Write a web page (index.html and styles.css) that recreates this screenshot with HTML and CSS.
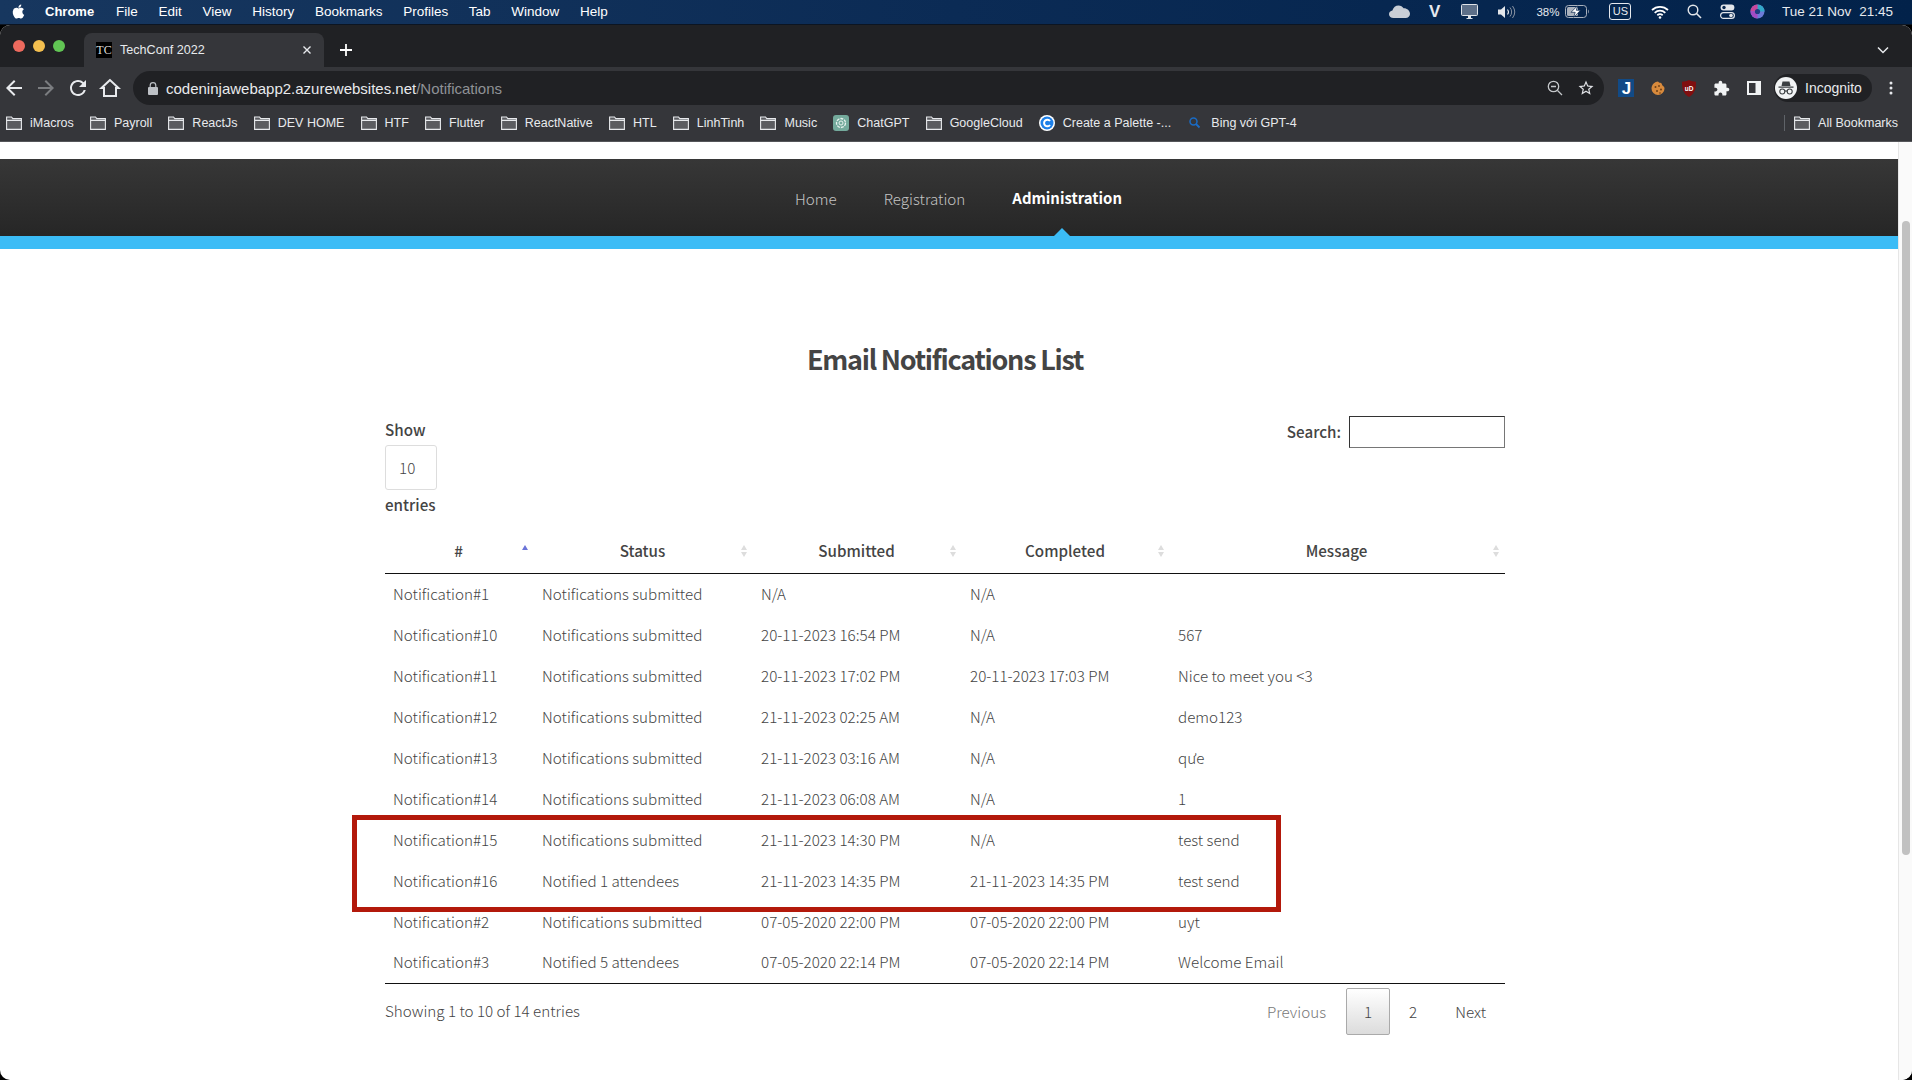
FILE: index.html
```html
<!DOCTYPE html>
<html lang="en">
<head>
    <meta charset="UTF-8">
    <title>TechConf 2022</title>
    <link rel="stylesheet" href="styles.css">
</head>
<body>
    <svg class="defs" width="0" height="0">
        <symbol id="folder" viewBox="0 0 16 14">
            <path d="M.6 1h4.900l1.300 1.600h8.600v10.800H.6z" fill="#5b5c60" stroke="#e8eaed" stroke-width="1.100"/>
            <path d="M.6 4.400h14.800" stroke="#e8eaed" stroke-width="1.100"/>
        </symbol>
    </svg>

    <!-- mac menu bar -->
    <div class="menubar">
        <div class="menus">
            <svg class="apple" viewBox="0 0 24 24"><path fill="#fff" d="M18.71 19.5c-.83 1.24-1.71 2.45-3.05 2.47-1.34.03-1.77-.79-3.29-.79-1.53 0-2 .77-3.27.82-1.31.05-2.3-1.32-3.14-2.53C4.25 17 2.94 12.45 4.7 9.39c.87-1.52 2.43-2.48 4.12-2.51 1.28-.02 2.5.87 3.29.87.78 0 2.26-1.07 3.8-.91.65.03 2.47.26 3.64 1.98-.09.06-2.17 1.28-2.15 3.81.03 3.02 2.65 4.03 2.68 4.04-.03.07-.42 1.44-1.38 2.83M13 3.5c.73-.83 1.94-1.46 2.94-1.5.13 1.17-.34 2.35-1.04 3.19-.69.85-1.83 1.51-2.95 1.42-.15-1.15.41-2.35 1.05-3.11z"/></svg>
            <span class="app-name">Chrome</span>
            <span>File</span>
            <span>Edit</span>
            <span>View</span>
            <span>History</span>
            <span>Bookmarks</span>
            <span>Profiles</span>
            <span>Tab</span>
            <span>Window</span>
            <span>Help</span>
        </div>
        <div class="status">
            <svg class="st-cloud" width="21" height="13" viewBox="0 0 21 13"><path fill="#c9ced6" d="M4.500 13C2 13 0 11.300 0 9.200 0 7.300 1.500 5.800 3.400 5.500 4.200 2.400 6.700.5 9.500.5c2.200 0 4.100 1.100 5.100 2.800 3-.3 6.400 2.200 6.400 5.700 0 2.300-1.900 4-4.300 4z"/></svg>
            <span class="st-v">V</span>
            <svg class="st-monitor" width="17" height="15" viewBox="0 0 17 15"><rect x=".5" y=".5" width="16" height="11" rx="1" fill="#5d6f88" stroke="#dfe3e8"/><path d="M5.500 14h6v1h-6zM7 12h3v2H7z" fill="#dfe3e8"/></svg>
            <svg class="st-sound" width="19" height="14" viewBox="0 0 19 14"><path fill="#e3e6ea" d="M0 4.500h3L7 1v12L3 9.500H0z"/><path fill="none" stroke="#e3e6ea" stroke-width="1.100" d="M9.500 4.500a4 4 0 0 1 0 5"/><path fill="none" stroke="#8a94a3" d="M12 2.500a7 7 0 0 1 0 9M14.500 1a10 10 0 0 1 0 12"/></svg>
            <span class="st-pct">38%</span>
            <svg class="st-batt" width="25" height="13" viewBox="0 0 25 13"><rect x=".5" y=".5" width="21" height="12" rx="3" fill="none" stroke="#aab2bd"/><rect x="2" y="2" width="11" height="9" rx="1.500" fill="#aab2bd"/><path d="M12.500.8 6 7.300h4.200L8.700 12.300l6.800-7h-4.200z" fill="#fff" stroke="#08264d" stroke-width=".7"/><path d="M23 4.500c1 .4 1 3.600 0 4z" fill="#aab2bd"/></svg>
            <span class="st-us">US</span>
            <svg class="st-wifi" width="18" height="14" viewBox="0 0 18 14"><path fill="none" stroke="#fff" stroke-width="1.800" d="M1 5c4.500-4.200 11.500-4.200 16 0M3.700 7.800c3-2.800 7.600-2.800 10.600 0M6.300 10.300c1.500-1.300 3.900-1.300 5.400 0"/><circle cx="9" cy="12.500" r="1.300" fill="#fff"/></svg>
            <svg class="st-search" width="15" height="15" viewBox="0 0 15 15"><circle cx="6" cy="6" r="4.800" fill="none" stroke="#e3e6ea" stroke-width="1.400"/><path d="m9.500 9.500 4.500 4.500" stroke="#e3e6ea" stroke-width="1.600"/></svg>
            <svg class="st-ctrl" width="15" height="15" viewBox="0 0 15 15"><rect x=".6" y=".6" width="13.800" height="5.800" rx="2.900" fill="#e3e6ea"/><circle cx="4" cy="3.500" r="1.700" fill="#08264d"/><rect x=".6" y="8.600" width="13.800" height="5.800" rx="2.900" fill="none" stroke="#e3e6ea" stroke-width="1.200"/><circle cx="11" cy="11.500" r="1.800" fill="#e3e6ea"/></svg>
            <svg class="st-siri" width="15" height="15" viewBox="0 0 15 15">
                <circle cx="7.500" cy="7.500" r="7" fill="#6c7bd8"/>
                <path d="M7.500.5a7 7 0 0 1 7 7H7.500z" fill="#32a8c8"/>
                <path d="M.5 7.500a7 7 0 0 1 7-7v7z" fill="#c8479c"/>
                <path d="M7.500 14.500a7 7 0 0 1-7-7h7z" fill="#a34bc4"/>
                <circle cx="7.500" cy="7.500" r="2.600" fill="#1f3c80"/>
            </svg>
            <span class="st-date">Tue 21 Nov</span>
            <span class="st-time">21:45</span>
        </div>
    </div>

    <div class="window">
        <!-- tabs -->
        <div class="tabstrip">
            <div class="lights">
                <i class="light red"></i>
                <i class="light yellow"></i>
                <i class="light green"></i>
            </div>
            <div class="tab">
                <span class="favicon">TC</span>
                <span class="tab-title">TechConf 2022</span>
                <svg class="tab-close" width="10" height="10" viewBox="0 0 10 10"><path d="m1.500 1.500 7 7m0-7-7 7" stroke="#e8eaed" stroke-width="1.400"/></svg>
            </div>
            <svg class="new-tab" width="14" height="14" viewBox="0 0 14 14"><path d="M7 1v12M1 7h12" stroke="#fff" stroke-width="1.800"/></svg>
            <svg class="tab-list" width="12" height="8" viewBox="0 0 12 8"><path d="m1 1.500 5 5 5-5" fill="none" stroke="#e8eaed" stroke-width="1.500"/></svg>
        </div>

        <!-- address bar -->
        <div class="toolbar">
            <svg class="nav-btn" viewBox="0 0 24 24"><path fill="#e8eaed" d="M20 11H7.830l5.590-5.590L12 4l-8 8 8 8 1.410-1.410L7.830 13H20v-2z"/></svg>
            <svg class="nav-btn" viewBox="0 0 24 24"><path fill="#7b7d80" d="M4 11h12.170l-5.590-5.590L12 4l8 8-8 8-1.410-1.410L16.170 13H4v-2z"/></svg>
            <svg class="nav-btn" viewBox="0 0 24 24"><path fill="#e8eaed" d="M17.650 6.350A7.950 7.950 0 0 0 12 4c-4.420 0-7.990 3.580-7.990 8s3.570 8 7.990 8c3.730 0 6.840-2.550 7.730-6h-2.080A5.990 5.990 0 0 1 12 18c-3.310 0-6-2.690-6-6s2.690-6 6-6c1.660 0 3.140.69 4.220 1.780L13 11h7V4l-2.350 2.350z"/></svg>
            <svg class="nav-btn" viewBox="0 0 24 24"><path fill="none" stroke="#e8eaed" stroke-width="2" d="M12 4 3.500 12H6v8h12v-8h2.500z"/></svg>
            <div class="omnibox">
                <svg class="lock" width="10" height="13" viewBox="0 0 10 13"><path d="M2.200 5V3.500a2.800 2.800 0 0 1 5.600 0V5" fill="none" stroke="#bdc1c6" stroke-width="1.200"/><rect y="5" width="10" height="8" rx="1" fill="#bdc1c6"/></svg>
                <span class="url-host">codeninjawebapp2.azurewebsites.net</span><span class="url-path">/Notifications</span>
                <svg class="omni-zoom" width="16" height="16" viewBox="0 0 16 16"><circle cx="6.500" cy="6.500" r="5.200" fill="none" stroke="#c4c7ca" stroke-width="1.300"/><path d="M4 6.500h5M10.500 10.500l4.500 4.500" stroke="#c4c7ca" stroke-width="1.300"/></svg>
                <svg class="omni-star" viewBox="0 0 24 24"><path fill="#dfe1e5" d="M22 9.240l-7.190-.62L12 2 9.190 8.630 2 9.240l5.460 4.730L5.820 21 12 17.270 18.180 21l-1.630-7.030L22 9.240zM12 15.400l-3.760 2.270 1-4.280-3.320-2.880 4.380-.38L12 6.100l1.710 4.040 4.380.38-3.320 2.880 1 4.280L12 15.400z"/></svg>
            </div>
            <div class="extensions">
                <svg width="16" height="18" viewBox="0 0 16 18"><rect width="16" height="18" fill="#114a86"/><text class="ext-j" x="8.500" y="15" text-anchor="middle">J</text></svg>
                <svg width="14" height="15" viewBox="0 0 14 15"><path fill="#d88a3c" d="M7 .5c1 1.500 2 1 3 1.500s1 2 1.500 2.500 2 1 2 3a6.500 6.500 0 1 1-13 0C.5 3.500 4 .5 7 .5z"/><g fill="#6d3f16"><circle cx="4.500" cy="6" r="1"/><circle cx="8" cy="5" r=".9"/><circle cx="10" cy="8.500" r="1"/><circle cx="6" cy="10" r="1"/><circle cx="9" cy="12" r=".8"/></g></svg>
                <svg width="14" height="17" viewBox="0 0 14 17"><path fill="#800f10" d="M7 0c2 1.200 4.500 1.600 7 1.700 0 6-.6 11.500-7 15.300C.6 13.200 0 7.700 0 1.700 2.500 1.600 5 1.200 7 0z"/><text class="ext-ub" x="7" y="10.500" text-anchor="middle">uD</text></svg>
                <svg width="17" height="17" viewBox="0 0 24 24"><path fill="#f1f3f4" d="M20.500 11H19V7c0-1.100-.9-2-2-2h-4V3.500C13 2.120 11.880 1 10.500 1S8 2.120 8 3.500V5H4c-1.100 0-1.990.9-1.990 2v3.800H3.500c1.490 0 2.700 1.210 2.700 2.700s-1.210 2.700-2.700 2.700H2V20c0 1.100.9 2 2 2h3.800v-1.500c0-1.490 1.210-2.700 2.700-2.700 1.490 0 2.700 1.210 2.700 2.700V22H17c1.100 0 2-.9 2-2v-4h1.500c1.380 0 2.500-1.120 2.500-2.500S21.880 11 20.500 11z"/></svg>
                <svg width="14" height="14" viewBox="0 0 14 14"><path fill="#f1f3f4" d="M0 0h14v14H0zM2 2v10h6.500V2z" fill-rule="evenodd"/></svg>
            </div>
            <div class="profile">
                <svg width="22" height="22" viewBox="0 0 22 22"><circle cx="11" cy="11" r="11" fill="#f1f3f4"/><path fill="#3c4043" d="M7.500 4.500h7l1 4.500h-9zM3.500 9.500h15v1.300h-15z"/><g fill="none" stroke="#3c4043" stroke-width="1.100"><circle cx="7.300" cy="14.500" r="2.500"/><circle cx="14.700" cy="14.500" r="2.500"/><path d="M9.800 14.300c.8-.5 1.600-.5 2.400 0"/></g></svg>
                <span>Incognito</span>
            </div>
            <svg class="menu-dots" width="4" height="14" viewBox="0 0 4 14"><circle cx="2" cy="2" r="1.500" fill="#e8eaed"/><circle cx="2" cy="7" r="1.500" fill="#e8eaed"/><circle cx="2" cy="12" r="1.500" fill="#e8eaed"/></svg>
        </div>

        <!-- bookmarks -->
        <div class="bookmarks">
            <div class="bm"><svg class="bm-icon"><use href="#folder"/></svg>iMacros</div>
            <div class="bm"><svg class="bm-icon"><use href="#folder"/></svg>Payroll</div>
            <div class="bm"><svg class="bm-icon"><use href="#folder"/></svg>ReactJs</div>
            <div class="bm"><svg class="bm-icon"><use href="#folder"/></svg>DEV HOME</div>
            <div class="bm"><svg class="bm-icon"><use href="#folder"/></svg>HTF</div>
            <div class="bm"><svg class="bm-icon"><use href="#folder"/></svg>Flutter</div>
            <div class="bm"><svg class="bm-icon"><use href="#folder"/></svg>ReactNative</div>
            <div class="bm"><svg class="bm-icon"><use href="#folder"/></svg>HTL</div>
            <div class="bm"><svg class="bm-icon"><use href="#folder"/></svg>LinhTinh</div>
            <div class="bm"><svg class="bm-icon"><use href="#folder"/></svg>Music</div>
            <div class="bm"><svg class="bm-icon" viewBox="0 0 16 16"><rect width="16" height="16" rx="3" fill="#74aa9c"/><circle cx="8" cy="8" r="4.500" fill="none" stroke="#e8f2ef" stroke-width="1.300" stroke-dasharray="3 1"/><circle cx="8" cy="8" r="2" fill="none" stroke="#e8f2ef"/></svg>ChatGPT</div>
            <div class="bm"><svg class="bm-icon"><use href="#folder"/></svg>GoogleCloud</div>
            <div class="bm"><svg class="bm-icon" viewBox="0 0 16 16"><circle cx="8" cy="8" r="8" fill="#fff"/><circle cx="8" cy="8" r="6.500" fill="#1c7fe8"/><path d="M11 6a3.300 3.300 0 1 0 0 4" fill="none" stroke="#fff" stroke-width="2"/></svg>Create a Palette -...</div>
            <div class="bm"><svg class="bm-icon" viewBox="0 0 16 16"><circle cx="6.500" cy="6.500" r="3.500" fill="none" stroke="#1a6bc4" stroke-width="1.500"/><path d="m9 9 3.500 3.500" stroke="#1a6bc4" stroke-width="1.800"/></svg>Bing với GPT-4</div>
            <div class="bm-all"><svg class="bm-icon"><use href="#folder"/></svg>All Bookmarks</div>
        </div>

        <div class="page">
            <div class="content">
                <nav class="site-nav">
                    <a href="#">Home</a>
                    <a href="#">Registration</a>
                    <a href="#" class="active">Administration</a>
                </nav>
                <div class="nav-stripe"></div>

                <div class="container">
                    <h2>Email Notifications List</h2>

                    <div class="dt-controls">
                        <div class="dt-length">
                            <label>Show</label>
                            <div class="length-select">10</div>
                            <label>entries</label>
                        </div>
                        <div class="dt-search">
                            <label for="q">Search:</label>
                            <input type="search" id="q">
                        </div>
                    </div>

                    <div class="table-wrap">
                        <table>
                            <colgroup>
                                <col class="col-id">
                                <col class="col-status">
                                <col class="col-submitted">
                                <col class="col-completed">
                                <col class="col-message">
                            </colgroup>
                            <thead>
                                <tr>
                                    <th class="sorted">#</th>
                                    <th>Status</th>
                                    <th>Submitted</th>
                                    <th>Completed</th>
                                    <th>Message</th>
                                </tr>
                            </thead>
                            <tbody>
                                <tr><td>Notification#1</td><td>Notifications submitted</td><td>N/A</td><td>N/A</td><td></td></tr>
                                <tr><td>Notification#10</td><td>Notifications submitted</td><td>20-11-2023 16:54 PM</td><td>N/A</td><td>567</td></tr>
                                <tr><td>Notification#11</td><td>Notifications submitted</td><td>20-11-2023 17:02 PM</td><td>20-11-2023 17:03 PM</td><td>Nice to meet you &lt;3</td></tr>
                                <tr><td>Notification#12</td><td>Notifications submitted</td><td>21-11-2023 02:25 AM</td><td>N/A</td><td>demo123</td></tr>
                                <tr><td>Notification#13</td><td>Notifications submitted</td><td>21-11-2023 03:16 AM</td><td>N/A</td><td>qưe</td></tr>
                                <tr><td>Notification#14</td><td>Notifications submitted</td><td>21-11-2023 06:08 AM</td><td>N/A</td><td>1</td></tr>
                                <tr><td>Notification#15</td><td>Notifications submitted</td><td>21-11-2023 14:30 PM</td><td>N/A</td><td>test send</td></tr>
                                <tr><td>Notification#16</td><td>Notified 1 attendees</td><td>21-11-2023 14:35 PM</td><td>21-11-2023 14:35 PM</td><td>test send</td></tr>
                                <tr><td>Notification#2</td><td>Notifications submitted</td><td>07-05-2020 22:00 PM</td><td>07-05-2020 22:00 PM</td><td>uyt</td></tr>
                                <tr><td>Notification#3</td><td>Notified 5 attendees</td><td>07-05-2020 22:14 PM</td><td>07-05-2020 22:14 PM</td><td>Welcome Email</td></tr>
                            </tbody>
                        </table>
                        <!-- red box drawn on the screenshot -->
                        <div class="highlight"></div>
                    </div>

                    <div class="dt-footer">
                        <div class="dt-info">Showing 1 to 10 of 14 entries</div>
                        <div class="dt-paging">
                            <a class="page-prev">Previous</a>
                            <a class="page-current">1</a>
                            <a class="page-num">2</a>
                            <a class="page-next">Next</a>
                        </div>
                    </div>
                </div>
            </div>
            <div class="scrollbar"><div class="scroll-thumb"></div></div>
        </div>
    </div>
</body>
</html>
```

FILE: styles.css
```css
* {
    box-sizing: border-box;
}

html, body {
    margin: 0;
    height: 1080px;
    overflow: hidden;
}

body {
    background: #000;
    font-family: "Liberation Sans", Arial, sans-serif;
    color: #e8eaed;
}

.defs {
    position: absolute;
}

/* menu bar */
.menubar {
    display: flex;
    justify-content: space-between;
    align-items: center;
    height: 25px;
    padding-bottom: 1px;
    background: linear-gradient(90deg, #17375f, #0b2b55 50%, #02224a);
    border-bottom: 1px solid #0c1522;
    color: #fff;
    font-size: 13.500px;
}

.menus {
    display: flex;
    align-items: center;
    gap: 20.700px;
    padding-left: 10px;
}

.apple {
    width: 17px;
    height: 17px;
    margin-right: -2.700px;
}

.app-name {
    margin-right: 1.300px;
    font-size: 13px;
    font-weight: bold;
}

.status {
    display: flex;
    align-items: center;
    padding-right: 19px;
    font-size: 12px;
    color: #e6e9ee;
}

.st-v {
    margin-left: 19px;
    font-size: 17px;
    font-weight: bold;
}

.st-monitor { margin-left: 21px; }
.st-sound { margin-left: 20px; }
.st-pct { margin-left: 19px; font-size: 11.500px; }
.st-batt { margin-left: 6px; }

.st-us {
    margin-left: 19px;
    width: 22px;
    height: 17px;
    border: 1px solid #e6e9ee;
    border-radius: 3px;
    font-size: 11px;
    line-height: 15px;
    text-align: center;
}

.st-wifi { margin-left: 20px; }
.st-search { margin-left: 18px; }
.st-ctrl { margin-left: 18px; }
.st-siri { margin-left: 15px; }
.st-date { margin-left: 16.500px; font-size: 13.500px; }
.st-time { margin-left: 8px; font-size: 13.500px; }

/* browser window */
.window {
    height: 1055px;
    background: #fff;
    border-radius: 10px;
    overflow: hidden;
    display: flex;
    flex-direction: column;
}

.tabstrip {
    display: flex;
    align-items: flex-end;
    flex: none;
    height: 42px;
    background: #202124;
}

.lights {
    display: flex;
    gap: 8px;
    align-self: flex-start;
    padding: 15px 0 0 13px;
    width: 84px;
}

.light {
    width: 12px;
    height: 12px;
    border-radius: 50%;
}

.red { background: #ed6a5e; }
.yellow { background: #f4bf4f; }
.green { background: #61c554; }

.tab {
    display: flex;
    align-items: center;
    width: 240px;
    height: 34px;
    padding: 0 12px;
    background: #35363a;
    border-radius: 8px 8px 0 0;
    font-size: 12.600px;
}

.favicon {
    width: 16px;
    height: 16px;
    margin-right: 8px;
    background: #000;
    color: #ddd;
    font-family: "Liberation Serif", serif;
    font-size: 12px;
    line-height: 16px;
    text-align: center;
}

.tab-title {
    flex: 1;
}

.new-tab {
    margin: 0 0 10px 15px;
}

.tab-list {
    margin: 0 23px 13px auto;
}

.toolbar {
    display: flex;
    align-items: center;
    flex: none;
    height: 42px;
    padding: 0 0 0 2px;
    background: #35363a;
}

.nav-btn {
    width: 24px;
    height: 24px;
    margin-right: 8px;
}

.omnibox {
    display: flex;
    align-items: center;
    width: 1471px;
    height: 34px;
    margin-left: 3px;
    padding-left: 15px;
    background: #202124;
    border-radius: 17px;
    font-size: 15px;
}

.lock {
    margin-right: 8px;
}

.url-host {
    color: #e8eaed;
}

.url-path {
    color: #8f9296;
}

.omni-zoom {
    margin-left: auto;
}

.omni-star {
    width: 18px;
    height: 18px;
    margin: 0 9px 0 14px;
}

.extensions {
    display: flex;
    align-items: center;
    gap: 17px;
    margin-left: 14px;
}

.ext-j {
    fill: #fff;
    font-family: "Liberation Sans", sans-serif;
    font-weight: bold;
    font-size: 17px;
}

.ext-ub {
    fill: #fff;
    font-family: "Liberation Sans", sans-serif;
    font-weight: bold;
    font-size: 6.500px;
}

.profile {
    display: flex;
    align-items: center;
    gap: 8px;
    width: 98px;
    height: 28px;
    margin-left: 13px;
    padding-left: 1px;
    background: #202124;
    border-radius: 14px;
    font-size: 14px;
}

.menu-dots {
    margin-left: 17px;
}

.bookmarks {
    display: flex;
    align-items: center;
    flex: none;
    height: 33px;
    padding: 0 14px 5px 6px;
    gap: 16.200px;
    background: #35363a;
    border-bottom: 1px solid #55565a;
    font-size: 12.500px;
    white-space: nowrap;
}

.bm, .bm-all {
    display: flex;
    align-items: center;
    gap: 8px;
}

.bm-all {
    margin-left: auto;
    padding-left: 9px;
    border-left: 1px solid #5f6368;
}

.bm-icon {
    width: 16px;
    height: 16px;
}

/* page */
.page {
    flex: 1;
    display: flex;
    min-height: 0;
    color: #444;
    font-family: "Noto Sans CJK SC", "Noto Sans", sans-serif;
    font-weight: 300;
    font-size: 15.200px;
}

.content {
    flex: 1;
    padding-top: 17px;
}

.site-nav {
    display: flex;
    justify-content: center;
    gap: 47px;
    height: 77px;
    padding: 26px 0 0 19px;
    background: linear-gradient(#373737, #262626);
    font-size: 15.200px;
    line-height: 26px;
}

.site-nav a {
    position: relative;
    color: #c4c4c4;
    text-decoration: none;
}

.site-nav a.active {
    color: #fff;
    font-size: 14.900px;
    font-weight: 700;
}

/* little triangle sitting on the blue stripe */
.site-nav a.active::after {
    content: "";
    position: absolute;
    left: 42px;
    bottom: 0;
    border: 8px solid transparent;
    border-top: 0;
    border-bottom-color: #3bbcf6;
}

.nav-stripe {
    height: 13px;
    background: #3bbcf6;
}

.container {
    width: 1120px;
    margin-left: 385px;
}

h2 {
    margin: 88px 0 0;
    color: #444;
    font-size: 27px;
    font-weight: 700;
    letter-spacing: -1.250px;
    line-height: 44px;
    text-align: center;
}

label {
    font-weight: 500;
    line-height: 24px;
}

.dt-controls {
    display: flex;
    justify-content: space-between;
    align-items: flex-start;
    margin-top: 36px;
}

.dt-length {
    display: flex;
    flex-direction: column;
    align-items: flex-start;
}

.length-select {
    width: 52px;
    height: 45px;
    margin: 4px 0 2px;
    padding-left: 13px;
    border: 1px solid #ddd;
    border-radius: 3px;
    line-height: 43px;
}

.dt-search {
    display: flex;
    align-items: center;
    gap: 8px;
    margin-top: -1px;
}

.dt-search label {
    padding-bottom: 2px;
}

.dt-search input {
    width: 156px;
    height: 32px;
    background: #fff;
    border: 1px solid #767676;
    border-top-color: #333;
    border-left-color: #333;
    outline: none;
}

.table-wrap {
    position: relative;
    margin-top: 14px;
}

table {
    width: 1120px;
    table-layout: fixed;
    border-collapse: collapse;
}

.col-id { width: 149px; }
.col-status { width: 219px; }
.col-submitted { width: 209px; }
.col-completed { width: 208px; }
.col-message { width: 335px; }

th {
    position: relative;
    height: 43px;
    padding: 0 18px 2px 16px;
    border-bottom: 1px solid #111;
    font-weight: 500;
    text-align: center;
    line-height: 24px;
}

/* datatables sort arrows */
th::before,
th::after {
    content: "";
    position: absolute;
    right: 6px;
    border: 3px solid transparent;
}

th::before {
    top: 15px;
    border-top: 0;
    border-bottom: 5px solid #ddd;
}

th::after {
    top: 22px;
    border-bottom: 0;
    border-top: 5px solid #ddd;
}

th.sorted::before {
    border-bottom-color: #6b74d8;
}

th.sorted::after {
    border-top-color: transparent;
}

td {
    height: 41px;
    padding: 0 8px 2px;
    white-space: nowrap;
}

tbody tr:last-child td {
    border-bottom: 1px solid #111;
}

.highlight {
    position: absolute;
    left: -33px;
    top: 285px;
    width: 929px;
    height: 97px;
    border: 5px solid #b3190b;
}

.dt-footer {
    display: flex;
    justify-content: space-between;
    align-items: flex-start;
    padding-top: 4px;
}

.dt-info {
    padding-top: 10px;
    line-height: 24px;
}

.dt-paging {
    display: flex;
    align-items: center;
    height: 47px;
    padding-right: 19px;
    line-height: 47px;
}

.page-prev {
    color: #777;
    margin-right: 20px;
}

.page-current {
    width: 44px;
    height: 47px;
    border: 1px solid #aaa;
    border-radius: 2px;
    background: linear-gradient(#fff, #dcdcdc);
    text-align: center;
    line-height: 45px;
}

.page-num {
    margin: 0 38px 0 19px;
}

.scrollbar {
    width: 14px;
    padding: 79px 3px 0;
    background: #fafafa;
    border-left: 1px solid #e6e6e6;
}

.scroll-thumb {
    width: 8px;
    height: 634px;
    background: #c1c1c1;
    border-radius: 4px;
}
```
